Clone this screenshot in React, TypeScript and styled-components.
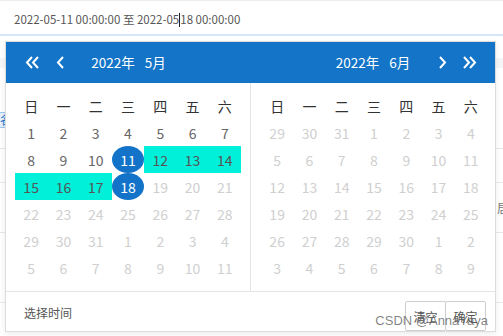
import React from "react";
import styled, { createGlobalStyle } from "styled-components";

const GlobalStyle = createGlobalStyle`
  html, body { margin: 0; padding: 0; background: #fff; }
  body { font-family: "Noto Sans CJK SC", "Noto Sans", sans-serif; }
  * { box-sizing: border-box; }
`;

const Page = styled.div`
  position: relative;
  width: 503px;
  height: 336px;
  overflow: hidden;
  background: #fff;
`;

const InputBar = styled.div`
  height: 36px;
  border-top: 1px solid #ececec;
  border-bottom: 2px solid #d3e6fa;
  padding: 4px 0 0 14px;
  display: flex;
  align-items: center;
  font-size: 11.5px;
  color: #555;
  white-space: nowrap;
  line-height: 1;
`;

const Caret = styled.span`
  display: inline-block;
  width: 1px;
  height: 14px;
  background: #222;
  vertical-align: middle;
`;

const BgTable = styled.div`
  display: flex;
  flex-direction: column;
`;

const Spacer = styled.div<{ $h: number }>`
  height: ${(p) => p.$h}px;
`;

const GrayBand = styled.div`
  height: 10px;
  background: #f5f6f7;
`;

const BgRow = styled.div<{ $h: number; $align?: string }>`
  height: ${(p) => p.$h}px;
  border-bottom: 1px solid #e8e8e8;
  display: flex;
  align-items: ${(p) => p.$align || "center"};
  justify-content: space-between;
`;

const Tag = styled.div`
  margin-top: 44px;
  margin-left: -8px;
  width: 50px;
  height: 16px;
  border: 1px solid #9cc8f2;
  background: #e4f0fc;
  color: #2a78cc;
  font-size: 12px;
  line-height: 14px;
  padding-left: 7px;
`;

const EdgeText = styled.div`
  margin-left: auto;
  width: 6px;
  overflow: hidden;
  white-space: nowrap;
  font-size: 12px;
  color: #777;
`;

const BgFooter = styled.div`
  flex: 1;
  height: 40px;
  background: #f4f5f6;
`;

const Popup = styled.div`
  position: absolute;
  left: 5px;
  top: 41px;
  width: 491px;
  height: 291px;
  border: 1px solid #dcdcdc;
  background: #fff;
  box-shadow: 0 2px 6px rgba(0, 0, 0, 0.08);
  display: flex;
  flex-direction: column;
`;

const Header = styled.div`
  height: 41px;
  background: #1475c8;
  color: #fff;
  display: grid;
  grid-template-columns: 245px 1fr;
`;

const HeaderHalf = styled.div`
  display: grid;
  grid-template-columns: 1fr auto 1fr;
  align-items: center;
`;

const NavGroup = styled.div<{ $side: "left" | "right" }>`
  display: flex;
  align-items: center;
  gap: ${(p) => (p.$side === "left" ? 16 : 15)}px;
  justify-self: ${(p) => (p.$side === "left" ? "start" : "end")};
  padding-left: ${(p) => (p.$side === "left" ? 19 : 0)}px;
  padding-right: ${(p) => (p.$side === "right" ? 18 : 0)}px;
  svg { display: block; }
`;

const Title = styled.div`
  font-size: 13.5px;
  line-height: 1;
  white-space: nowrap;
  span { margin-left: 10px; }
`;

const Body = styled.div`
  display: flex;
  height: 208px;
`;

const Panel = styled.div<{ $left?: boolean }>`
  width: ${(p) => (p.$left ? 245 : 244)}px;
  padding: 9px ${(p) => (p.$left ? 9 : 8)}px 0 ${(p) => (p.$left ? 9 : 10)}px;
  border-right: ${(p) => (p.$left ? "1px solid #e4e4e4" : "none")};
`;

const Grid = styled.div`
  width: 226px;
  display: grid;
  grid-template-columns: repeat(7, 1fr);
  grid-auto-rows: 27px;
`;

const WeekCell = styled.div`
  display: flex;
  align-items: center;
  justify-content: center;
  font-size: 14px;
  color: #333;
`;

type Kind = "cur" | "other" | "range" | "edge";

const DayCell = styled.div<{ $kind: Kind }>`
  display: flex;
  align-items: center;
  justify-content: center;
  font-size: 14px;
  color: ${(p) =>
    p.$kind === "other" ? "#cfcfcf" : p.$kind === "edge" ? "#fff" : p.$kind === "range" ? "#555" : "#666"};
  background: ${(p) =>
    p.$kind === "range" ? "#00f0da" : p.$kind === "edge" ? "#1273c8" : "transparent"};
  border-radius: ${(p) => (p.$kind === "edge" ? "50%" : "0")};
`;

const Footer = styled.div`
  flex: 1;
  border-top: 1px solid #e4e4e4;
  display: flex;
  align-items: flex-start;
  justify-content: space-between;
  padding: 9px 9px 0 18px;
`;

const FooterLabel = styled.div`
  font-size: 12px;
  color: #555;
  line-height: 28px;
  margin-top: -2px;
`;

const Buttons = styled.div`
  display: flex;
`;

const Btn = styled.button`
  height: 30px;
  width: 41px;
  border: 1px solid #cfcfcf;
  background: #fff;
  font-family: inherit;
  font-size: 12px;
  color: #555;
  padding: 0;
  border-radius: 2px;
  & + & { margin-left: -1px; }
`;

const Watermark = styled.div`
  position: absolute;
  right: 15px;
  bottom: 8px;
  font-family: "Liberation Sans", Arial, sans-serif;
  font-size: 13px;
  color: rgba(95, 95, 95, 0.78);
  pointer-events: none;
  white-space: nowrap;
`;

const DoubleLeft = () => (
  <svg width="15" height="13" viewBox="0 0 15 13">
    <path d="M7 1 L2 6.5 L7 12 M13 1 L8 6.5 L13 12" stroke="#fff" strokeWidth="2" fill="none" />
  </svg>
);
const SingleLeft = () => (
  <svg width="9" height="13" viewBox="0 0 9 13">
    <path d="M7 1 L2 6.5 L7 12" stroke="#fff" strokeWidth="2" fill="none" />
  </svg>
);
const SingleRight = () => (
  <svg width="9" height="13" viewBox="0 0 9 13">
    <path d="M2 1 L7 6.5 L2 12" stroke="#fff" strokeWidth="2" fill="none" />
  </svg>
);
const DoubleRight = () => (
  <svg width="15" height="13" viewBox="0 0 15 13">
    <path d="M2 1 L7 6.5 L2 12 M8 1 L13 6.5 L8 12" stroke="#fff" strokeWidth="2" fill="none" />
  </svg>
);

const WEEK = ["日", "一", "二", "三", "四", "五", "六"];

type Day = { d: number; k: Kind };

function buildMay(): Day[] {
  const days: Day[] = [];
  for (let i = 1; i <= 31; i++) {
    let k: Kind = "cur";
    if (i === 11 || i === 18) k = "edge";
    else if (i > 11 && i < 18) k = "range";
    else if (i > 18) k = "other";
    days.push({ d: i, k });
  }
  for (let i = 1; i <= 11; i++) days.push({ d: i, k: "other" });
  return days;
}

function buildJune(): Day[] {
  const days: Day[] = [];
  [29, 30, 31].forEach((d) => days.push({ d, k: "other" }));
  for (let i = 1; i <= 30; i++) days.push({ d: i, k: "other" });
  for (let i = 1; i <= 9; i++) days.push({ d: i, k: "other" });
  return days;
}

const Month: React.FC<{ days: Day[]; left?: boolean }> = ({ days, left }) => (
  <Panel $left={left}>
    <Grid>
      {WEEK.map((w) => (
        <WeekCell key={w}>{w}</WeekCell>
      ))}
      {days.map((x, i) => (
        <DayCell key={i} $kind={x.k}>
          {x.d}
        </DayCell>
      ))}
    </Grid>
  </Panel>
);

export default function App() {
  return (
    <Page>
      <GlobalStyle />
      <InputBar>
        2022-05-11 00:00:00 至 2022-05
        <Caret />
        18 00:00:00
      </InputBar>
      <BgTable>
        <Spacer $h={22} />
        <GrayBand />
        <BgRow $h={81} $align="flex-start">
          <Tag>名称</Tag>
        </BgRow>
        <BgRow $h={34} />
        <BgRow $h={50}>
          <EdgeText>居住</EdgeText>
        </BgRow>
        <BgRow $h={70} />
        <BgFooter />
      </BgTable>
      <Popup>
        <Header>
          <HeaderHalf>
            <NavGroup $side="left">
              <DoubleLeft />
              <SingleLeft />
            </NavGroup>
            <Title>
              2022年<span>5月</span>
            </Title>
            <div />
          </HeaderHalf>
          <HeaderHalf>
            <div />
            <Title>
              2022年<span>6月</span>
            </Title>
            <NavGroup $side="right">
              <SingleRight />
              <DoubleRight />
            </NavGroup>
          </HeaderHalf>
        </Header>
        <Body>
          <Month days={buildMay()} left />
          <Month days={buildJune()} />
        </Body>
        <Footer>
          <FooterLabel>选择时间</FooterLabel>
          <Buttons>
            <Btn>清空</Btn>
            <Btn>确定</Btn>
          </Buttons>
        </Footer>
      </Popup>
      <Watermark>CSDN @AnnaYaya</Watermark>
    </Page>
  );
}
